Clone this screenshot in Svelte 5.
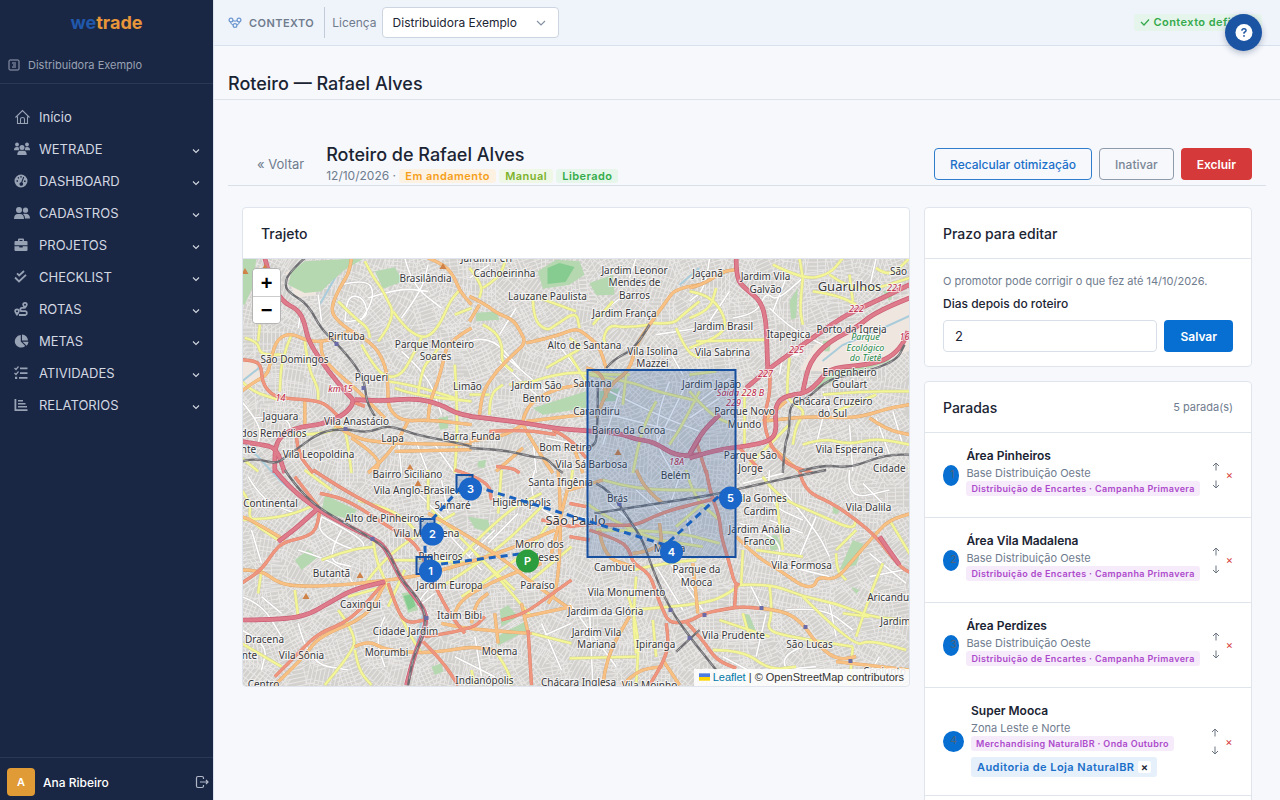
<script lang="ts">
	type Kind = 'street' | 'yellow' | 'orange' | 'trunk' | 'motorway' | 'rail';

	interface Tile {
		x: number;
		y: number;
		parks: string[];
		roads: Record<Kind, string>;
	}

	const menu = [
		{ label: 'Início', icon: 'home', open: false },
		{ label: 'WETRADE', icon: 'users', open: true },
		{ label: 'DASHBOARD', icon: 'gauge', open: true },
		{ label: 'CADASTROS', icon: 'friends', open: true },
		{ label: 'PROJETOS', icon: 'briefcase', open: true },
		{ label: 'CHECKLIST', icon: 'checks', open: true },
		{ label: 'ROTAS', icon: 'route', open: true },
		{ label: 'METAS', icon: 'pie', open: true },
		{ label: 'ATIVIDADES', icon: 'tasks', open: true },
		{ label: 'RELATORIOS', icon: 'bars', open: true }
	];

	const stops = [
		{ name: 'Área Pinheiros', base: 'Base Distribuição Oeste', tag: 'Distribuição de Encartes · Campanha Primavera', audit: '' },
		{ name: 'Área Vila Madalena', base: 'Base Distribuição Oeste', tag: 'Distribuição de Encartes · Campanha Primavera', audit: '' },
		{ name: 'Área Perdizes', base: 'Base Distribuição Oeste', tag: 'Distribuição de Encartes · Campanha Primavera', audit: '' },
		{ name: 'Super Mooca', base: 'Zona Leste e Norte', tag: 'Merchandising NaturalBR · Onda Outubro', audit: 'Auditoria de Loja NaturalBR' }
	];

	let days = $state(2);

	// Tile geometry is stored at three units per map pixel
	const tiles: Tile[] = [
		{
			x: 242,
			y: 258,
			parks: ['M0 0H45L32 90 10 140 0 140Z', 'M190 10L370 0 310 35 270 70 240 100 190 105 140 80 150 40Z', 'M400 40L460 28 485 70 425 92Z', 'M590 480L620 475 620 510 595 515Z'],
			roads: {
				street: 'M300 80L380 60 400 120 350 200M380 120L470 90 560 100M480 180L540 100 560 20M130 130L180 150 170 210M40 480L140 470 150 540M480 280L560 350 600 470M470 540L480 645M520 540L560 645M580 560L640 645M230 110L240 190M490 0L510 80 600 150M0 430L60 500 50 560M310 190L380 190 370 120 320 110Z',
				yellow: 'M370 10L390 50 420 90 440 130 455 160 440 210 410 250M455 160L490 210 540 240 570 230 600 190 625 130 655 95M290 130L340 180 380 210 385 240M10 240L50 250 55 290 120 290M55 200L50 250M150 230L120 300 115 400M190 250L200 330 230 390 230 425M360 260L400 330 440 360 480 350 510 300 540 240M530 410L540 330 580 290 600 250M440 370L510 380 640 420M640 320L650 480 640 645M0 370L30 400 110 425M0 600L50 640M150 530L260 530 310 490 330 645M460 390L510 410 690 430M640 170L690 150',
				orange: 'M330 0L325 40 300 80 275 130 270 170 320 215 400 260 435 330 440 400 440 450 480 490 560 485 690 500M0 400L40 370 80 350 90 290 110 240 150 225 200 250 260 250 320 220M240 250L235 290 280 340 340 390 380 430 430 480M560 0L610 20 640 60 655 100 690 140M690 210L620 250 605 310 590 370 565 430 560 485M280 500L320 530 400 555 690 560M330 540L420 600 400 645M500 490L460 570 380 645M190 425V500M460 580L690 575',
				trunk: 'M165 540L170 590 215 645M0 305L45 308 60 330 62 370 80 400 110 420 200 425 250 435 290 475M330 430L370 445',
				motorway: 'M70 0L85 60 120 130 170 155 190 195 200 250 260 340 320 410 340 430 310 470 240 500 180 505 130 525 100 560V645M340 425L420 430 520 420 600 440 640 465 690 475M0 550L60 560 105 570 130 645',
				rail: 'M190 0L140 45 130 85 145 105 200 140 240 215 285 255 345 325 370 375 375 430 400 475M0 610L40 600 100 618 130 600 170 570 240 520 310 512 380 525 440 500 520 530 600 545 690 565'
			}
		},
		{
			x: 470,
			y: 258,
			parks: ['M205 40L260 5 330 10 345 50 300 80 220 92Z', 'M360 75L430 50 435 110 380 112Z', 'M20 165L80 160 90 185 20 190Z', 'M190 450L350 400V450L220 470Z', 'M390 400L450 390 440 430 390 430Z', 'M25 610L50 605 45 630 25 628Z'],
			roads: {
				street: 'M0 250L60 230 150 330M100 290L230 400M90 310L210 420M250 240L330 340M400 160L480 100M500 0L480 60M560 230L690 210M590 260L640 350M380 380L560 470 690 520M450 400L400 560M0 60L60 20M140 150L90 230M190 540L200 645M230 540L330 560M600 370L540 520 610 645M660 360L560 560M420 470L620 520',
				yellow: 'M0 30L40 80 30 120M40 90L90 60 110 0M40 200L80 220 100 270 95 310 130 340M190 110V180L230 220 260 200 320 160 330 210M320 160L210 120M540 200L470 210 420 200 400 240 410 260M550 195L610 200 640 170 690 130M230 330L300 290 340 270 300 240M190 370L280 340 400 350 480 350M620 210L650 280 690 300M120 380L190 370M370 200L430 130M360 350L480 370 560 400 690 430M560 430L520 500 490 645M470 350L460 440M690 400L640 500 600 560M60 470V410L100 380M300 290L350 370M0 410H60',
				orange: 'M0 115L50 140 80 165 130 185 150 215 170 255 130 290 80 340 40 400 30 470M170 255L260 235 320 210 350 230 390 265 410 330M690 80L620 90 590 130 540 200 500 260 480 340 420 380 380 480M160 490L170 440 260 390 350 380M0 190L30 140M0 550L60 540 110 530 160 500M310 560L340 645M160 500L200 570 250 645M80 640L160 570M340 470L170 490M350 330L400 340 410 420',
				trunk: 'M80 625L130 630 150 645M250 515L300 540 350 600M60 520L160 515 260 530',
				motorway: 'M0 475L150 492 260 512 350 518 450 525 500 545 550 550 620 595 690 590M690 540L660 590',
				rail: 'M0 570L100 575 190 597 230 600 260 630 280 645M385 380V540L370 565 350 570M540 200L500 270 440 300 410 330'
			}
		},
		{
			x: 690,
			y: 258,
			parks: ['M300 130L325 90 320 180 305 185Z', 'M400 250L425 245 420 280 405 280Z', 'M420 345L600 295 600 310 450 360 370 400Z', 'M580 100L620 90 600 130Z'],
			roads: {
				street: 'M60 0L50 90 0 130M130 180L200 170 230 100 260 130 340 60M240 150L300 210 400 260M290 60L250 160M560 0L540 90M330 290L280 290 270 350M480 500L490 640M400 480L380 560M560 480L600 590M610 460L640 560M400 400L420 460M120 100L60 190M30 430L120 360M0 480L90 420',
				yellow: 'M0 100L60 110 110 180 100 230 0 270M20 250L230 245M340 60L330 150 340 200M250 20L340 65 420 50 460 0M420 50L500 110 660 60M480 50L490 130M300 300L290 400 300 430 350 460 320 500 310 560M340 560L400 540 480 560 560 540 660 560M400 410L520 400 660 400M370 100L440 110 500 140M165 400V560M0 400L60 470 130 500M0 350L80 340M330 0L340 60M180 620L300 500M560 30L600 60 660 0M440 460L560 410M0 180L60 160 80 90',
				orange: 'M0 90L40 80 100 40 140 35M220 490L340 475 460 480 520 475 600 450 660 440M540 480L590 515 660 530M240 560L330 640M290 430L220 490',
				trunk: 'M240 330L245 400 220 480 240 560 290 620 370 645M20 550L50 645M150 570L215 640',
				motorway: 'M140 0V60L165 90 215 130 230 190 232 260 235 340M660 80L560 130 500 155 440 190 340 260 240 330 170 390M0 600L80 575 170 565 240 550 262 520 255 450 280 415 350 405 390 370 420 330 540 320 600 300 640 260 655 220M660 120L560 160 500 210 420 250 360 310 340 400M0 590L30 530 90 470',
				rail: 'M280 645L285 560 300 520V450L320 430 350 425 420 360 500 350 620 310 645 260M330 640L400 620 480 630 560 600 610 590 660 590'
			}
		},
		{
			x: 242,
			y: 470,
			parks: ['M250 75L345 120 330 150 240 125Z', 'M775 420L800 405 830 440 780 470Z', 'M765 500L850 455 860 480 770 527Z', 'M480 370L510 365 530 420 500 428Z', 'M680 140L740 150 750 190 700 175Z', 'M570 590L600 580 605 605 580 615Z', 'M160 270L200 240 230 260 180 300Z'],
			roads: {
				street: 'M240 140L380 210 350 250 230 190ZM170 240L300 280 340 350M0 380L60 400 120 500M60 380L120 430M600 30L620 130M560 360L520 400 560 430M580 370L530 410M30 180L60 280M520 60L640 180M740 220L830 130M680 260L760 180M0 480L80 520 60 600M430 440L400 500 430 590M700 500L720 620M900 460L960 600M900 500L990 460M640 560L760 620M20 20L60 90 160 130M300 180L250 270 330 290M880 0L850 90 990 170M170 460L200 580 320 600M610 180L720 300',
				yellow: 'M0 60L30 100 20 150 110 210M395 205L400 260 430 330M240 270L320 240 400 230M360 360L420 260 640 130M440 410L490 300M290 420L350 500 320 560 250 645M440 270L560 270 700 280M620 300L780 130 900 70M700 250L820 360M570 120L700 240 870 440M60 300L50 370M160 360L170 440M340 540L350 600 390 645M760 540L800 600 810 645M690 600L700 645M870 490L990 520M780 0L770 130M560 0V120M600 350L760 250 900 110M660 380L850 260 930 150M520 180L480 130 350 90M230 100L150 140 0 150M190 0L270 60M430 330L490 470 540 550M990 230L870 330M320 380L430 350M0 520L120 590',
				orange: 'M0 300L60 300 110 340 180 350 300 345 400 335 520 320 640 290 800 240 940 180M560 130L650 180 790 270 860 330 990 420M870 490L700 480 600 460M340 530L380 510 430 540 540 550 630 540 690 530 760 540M640 440V400L760 330 900 280M690 460L700 400 740 370M950 0L960 120 950 350 920 400M760 430L770 520M860 490L840 400M130 210L30 150 0 140M100 645L190 560 230 500 380 440 430 340M980 50L930 250M850 440L990 410',
				trunk: 'M235 115L230 170 200 200 130 215 100 240 60 300 0 340M230 110L160 20M235 70L290 80 350 110 440 170 510 210 540 250 580 350 630 440 670 490M100 620L180 540 230 490 330 450 430 335M545 515L600 570 650 645M440 340L470 430 500 460 550 450M640 0L740 30 750 90M860 480L870 645M990 330L920 380 850 430 780 450M990 170L900 150M215 0L290 50 400 110 480 150M550 500L690 480 730 440',
				motorway: 'M100 0L140 50 230 120 320 170 395 205 430 230 460 290 480 330 520 380 555 430 550 480 520 550 495 645M0 450L80 450 190 440 260 400 330 360 430 335M235 110L170 170 110 215',
				rail: 'M130 0L160 45 225 110 320 165 395 208 440 240 475 325 530 385 555 440 545 500 515 560 500 645'
			}
		},
		{
			x: 570,
			y: 470,
			parks: ['M810 300L850 210 882 222 860 285Z', 'M520 430L540 435 562 490 540 500Z', 'M590 200L620 195 642 235 605 242Z', 'M790 110L810 112 805 132 790 130Z', 'M845 350L870 360 860 372Z'],
			roads: {
				street: 'M280 250L400 420M260 290L340 420M300 270L380 370M520 40L640 10M510 160L640 200 620 300M600 0L590 100 700 150M640 60L740 180 780 260M880 40L960 120M900 320L1000 300M540 340L580 420M620 280L780 320M650 420L760 410 850 480M700 530L620 560 690 640M130 380L240 360M30 440L200 430M60 420L70 645M0 400L140 590M460 560L620 645M840 0L830 90 960 60M930 560L880 645M620 600L740 590M700 190L600 150M780 400L800 500M200 60L290 140M120 100L280 240M330 20L300 110M350 130L370 230M590 430L560 560M740 140L690 260M900 250L1010 340',
				yellow: 'M50 100L200 200 400 230M80 180L300 180 450 220M510 345L600 340 700 380 800 400 900 440 1000 450M510 345L480 370 410 400 190 420M580 20L620 80 740 130 850 180 860 150M800 250V300L830 330M860 180L800 240M560 240L700 260M190 300L280 280 380 270M200 320L190 440 200 550M0 565L200 560M600 345L610 430 590 480 660 500 850 530M540 500L520 430M430 540L520 540 600 600 680 590M700 380L850 530 900 510 1010 540M940 280L910 350 860 500M320 170L400 100M10 0L0 60M250 450L260 560M520 240L515 345M960 150L1026 260M350 0L370 80 450 150M100 30L200 60 410 60M170 360L210 470 200 645M620 80L640 240M820 430L900 440M850 530L840 645M450 450L600 500',
				orange: 'M570 415L640 420 700 460 740 520 800 570 860 560M500 200L560 260 630 300 700 350 735 350 745 320 800 330 850 270 920 190 960 150 1026 130M370 280L385 430M0 60L100 30M800 575L1020 600M100 645L110 560 180 440M280 100L230 60 200 0M280 570L330 645M90 180L100 260 190 290M190 250L280 240 270 160M160 645L200 600 280 590',
				trunk: 'M0 170L60 160 190 170 250 140 320 115 500 70M60 180L150 210 180 240 190 280 240 310 260 370 280 420 300 460 360 455 400 430 480 415 520 410 570 415M350 455L400 510 440 570 500 595M410 0L420 60 450 140 455 200 480 280 495 340 510 345M500 340L495 415M690 0L700 60 790 100 860 150 920 200 990 290 1026 310M290 460L300 520 280 580 240 645M0 200L60 210M0 100L50 110',
				motorway: 'M930 200L990 285',
				rail: 'M75 130L330 90 430 75 580 40 770 0M80 40L120 60 180 150 220 210 250 300 300 415 360 500 440 600M320 545L390 480'
			}
		}
	];

	const kinds: Kind[] = ['street', 'yellow', 'orange', 'trunk', 'motorway', 'rail'];

	// Rounds each polyline by curving through the midpoints of its segments
	function soften(d: string) {
		let out = '';
		for (const part of d.split('M').slice(1)) {
			const tokens = part.match(/[LHVZ]|-?[\d.]+/g) ?? [];
			const pts: number[][] = [];
			let i = 0;
			while (i < tokens.length) {
				const last = pts[pts.length - 1];
				if (tokens[i] === 'H') {
					pts.push([+tokens[i + 1], last[1]]);
					i += 2;
				} else if (tokens[i] === 'V') {
					pts.push([last[0], +tokens[i + 1]]);
					i += 2;
				} else if (tokens[i] === 'L') {
					i += 1;
				} else if (tokens[i] === 'Z') {
					pts.push(pts[0]);
					i += 1;
				} else {
					pts.push([+tokens[i], +tokens[i + 1]]);
					i += 2;
				}
			}
			out += `M${pts[0].join(' ')}`;
			for (let n = 1; n < pts.length - 1; n++) {
				const [x, y] = pts[n];
				const [nx, ny] = pts[n + 1];
				out += `Q${x} ${y} ${(x + nx) / 2} ${(y + ny) / 2}`;
			}
			out += `L${pts[pts.length - 1].join(' ')}`;
		}
		return out;
	}

	// Small residential streets, laid out as short slanted grids
	let seed = 7;
	function rand() {
		seed = (seed * 16807) % 2147483647;
		return seed / 2147483647;
	}

	function buildBlocks() {
		const out: { x: number; y: number; turn: number; d: string }[] = [];
		for (let y = 262; y < 700; y += 26) {
			for (let x = 246; x < 920; x += 26) {
				let d = '';
				for (let i = -16; i <= 16; i += 4) {
					const a = Math.round(rand() * 10);
					d += `M${i} ${-18 + a}V${18 - a}`;
					if (rand() > 0.4) d += `M${-17 + a} ${i}H${17 - a}`;
				}
				out.push({ x, y, turn: Math.round(rand() * 90), d });
			}
		}
		return out;
	}
	const blocks = buildBlocks();

	// [text, centre x, baseline y]
	const places: [string, number, number][] = [
		['Brasilândia', 426, 282], ['Cachoeirinha', 505, 277], ['Jardim Peri', 487, 262], ['Jardim Leonor', 635, 274],
		['Mendes de', 635, 286], ['Barros', 635, 299], ['Jaçanã', 708, 277], ['Jardim Vila', 766, 280], ['Galvão', 766, 293],
		['São', 899, 275], ['Lauzane Paulista', 548, 300], ['Jardim França', 625, 317], ['Jardim Brasil', 724, 330],
		['Itapegica', 789, 338], ['Porto da Igreja', 852, 333], ['Pirituba', 347, 340], ['Parque Monteiro', 435, 348],
		['Soares', 436, 360], ['Alto de Santana', 585, 349], ['Vila Isolina', 653, 355], ['Mazzei', 653, 367],
		['Vila Sabrina', 723, 356], ['São Domingos', 295, 363], ['Piqueri', 372, 381], ['Limão', 468, 390],
		['Jardim São', 537, 389], ['Bento', 537, 402], ['Santana', 593, 387], ['Jardim Japão', 712, 388],
		['Engenheiro', 850, 376], ['Goulart', 850, 388], ['Carandiru', 597, 415], ['Parque Novo', 745, 415],
		['Mundo', 745, 428], ['Chácara Cruzeiro', 833, 405], ['do Sul', 833, 417], ['Jaguara', 281, 420],
		['Vila Anastácio', 357, 425], ['Barra Funda', 472, 440], ['Lapa', 393, 442], ['dos Remédios', 274, 437],
		['Bairro da Coroa', 629, 434], ['Bom Retiro', 566, 451], ['Vila Sá Barbosa', 592, 468], ['Vila Esperança', 850, 453],
		['Parque São', 751, 459], ['Jorge', 751, 472], ['Vila Leopoldina', 319, 458], ['nte', 249, 453],
		['Bairro Siciliano', 408, 478], ['Belém', 676, 479], ['Cidade Líder', 903, 472], ['Vila Anglo-Brasileira', 421, 494],
		['Santa Ifigênia', 561, 486], ['Higienópolis', 522, 506], ['Sumaré', 453, 509], ['Brás', 618, 502],
		['Continental', 271, 507], ['Alto de Pinheiros', 385, 522], ['Vila Gomes', 761, 502], ['Cardim', 761, 515],
		['Vila Dalila', 869, 511], ['Vila Madalena', 427, 537], ['Pinheiros', 441, 560], ['Morro dos', 540, 548],
		['Ingleses', 540, 561], ['Mooca', 670, 552], ['Jardim Anália', 760, 533], ['Franco', 760, 545],
		['Cambuci', 615, 571], ['Parque da', 697, 573], ['Mooca', 697, 586], ['Vila Formosa', 802, 569],
		['Butantã', 332, 577], ['Jardim Europa', 450, 589], ['Paraíso', 538, 589], ['Vila Monumento', 627, 596],
		['Caxingui', 361, 608], ['Itaim Bibi', 460, 619], ['Jardim da Glória', 606, 615], ['Aricanduva', 894, 601],
		['Dracena', 265, 643], ['Cidade Jardim', 406, 635], ['Jardim Vila', 597, 636], ['Mariana', 597, 648],
		['Ipiranga', 656, 648], ['Vila Prudente', 734, 639], ['São Lucas', 810, 648], ['Jardim', 896, 625],
		['nte', 250, 659], ['Vila Sônia', 302, 659], ['Morumbi', 387, 656], ['Moema', 500, 655],
		['Indianópolis', 485, 684], ['Chácara Inglesa', 579, 686], ['Centro', 264, 688], ['Vila Moinho', 650, 689],
		['Conjunto', 885, 675]
	];

	const shields: [string, number, number][] = [
		['221', 895, 291], ['222', 857, 312], ['225', 797, 353], ['227', 766, 377], ['Saída 228 B', 741, 396],
		['229', 734, 406], ['14', 281, 401], ['km 15', 341, 392], ['18A', 677, 465], ['16', 905, 340]
	];

	const peaks = ['246 271', '266 267', '444 266', '411 467', '419 483', '307 596', '361 575', '619 452'];
	const stations = ['337 344', '364 388', '346 429', '705 615', '762 608', '806 627', '851 661', '690 638', '671 610', '620 504', '373 539', '427 618'];

	const pins = [
		{ label: '1', x: 431, y: 571 },
		{ label: '2', x: 433, y: 534 },
		{ label: '3', x: 471, y: 489 },
		{ label: '4', x: 672, y: 552 },
		{ label: '5', x: 731, y: 498 },
		{ label: 'P', x: 528, y: 561 }
	];
</script>

<div class="shell">
	<aside class="sidebar">
		<div class="brand"><span>we</span>trade</div>
		<div class="tenant">
			<svg viewBox="0 0 12 12" width="12" height="12" fill="none" stroke="currentColor">
				<rect x="1" y="1" width="10" height="10" rx="1" />
				<path d="M4 4h4M5 6h3M4 8h4" />
			</svg>
			Distribuidora Exemplo
		</div>
		<nav>
			{#each menu as item}
				<a href="#top" class="item">
					<svg class="icon" viewBox="0 0 16 16" fill="currentColor">
						{#if item.icon === 'home'}
							<path fill="none" stroke="currentColor" stroke-width="1.1" d="M3.5 7.5V14.5H13.5V7.5M1.5 8.5L8.5 1.5 15.5 8.5M6.5 14.5V10Q6.500 8.500 8.500 8.500T10.500 10V14.500" />
						{:else if item.icon === 'users'}
							<circle cx="3" cy="3.500" r="1.900" /><circle cx="13" cy="3.500" r="1.900" /><circle cx="8" cy="6.500" r="2.500" />
							<path d="M0 9Q0 6 3 6 4.400 6 5 6.800 4.400 8 5.400 9.300H0ZM16 9Q16 6 13 6 11.600 6 11 6.800 11.600 8 10.600 9.300H16ZM3.300 14Q3.300 9.800 6.500 9.800H9.500Q12.700 9.800 12.700 14Z" />
						{:else if item.icon === 'gauge'}
							<path fill-rule="evenodd" d="M7 1.500A6.500 6.500 0 1 0 7 14.500 6.500 6.500 0 1 0 7 1.500ZM6.200 3.200H7.800V4.600H6.200ZM2.500 7.200H4V8.700H2.500ZM3.600 4.500L4.700 4.100 5.200 5.200 4.100 5.700ZM10 7.500H11.600V9H10ZM9.200 3.800L10.200 4.300 8.300 9.500A1.800 1.800 0 1 1 7.200 9.200Z" />
						{:else if item.icon === 'friends'}
							<circle cx="5" cy="5" r="3" /><circle cx="11.500" cy="5.200" r="2.600" />
							<path d="M0 14Q0 9 4 9H6Q10 9 10 14ZM10 8.800Q16 8 16 13.500H11Q11.200 10.500 9 9Z" />
						{:else if item.icon === 'briefcase'}
							<path fill-rule="evenodd" d="M4 4V2.500Q4 1.500 5 1.500H9Q10 1.500 10 2.500V4H12.500Q13.500 4 13.500 5V8.300H.5V5Q.5 4 1.500 4ZM5.500 4H8.500V3H5.500ZM.5 9.200H5.300V10.500H8.700V9.200H13.500V13Q13.500 14 12.500 14H1.500Q.5 14 .5 13Z" />
						{:else if item.icon === 'checks'}
							<path fill="none" stroke="currentColor" stroke-width="1.800" d="M3 4.300L5.200 6.500 10 2M1 8.500L5 12.500 12 5.800" />
						{:else if item.icon === 'route'}
							<path fill-rule="evenodd" d="M3 7.500A2.700 2.700 0 0 1 5.700 10.200Q5.700 11.500 3 15 .3 11.500 .3 10.200A2.700 2.700 0 0 1 3 7.500ZM3 9.300A1 1 0 1 0 3 11.300 1 1 0 1 0 3 9.300ZM11 1A2.700 2.700 0 0 1 13.700 3.700Q13.700 5 11 8 8.300 5 8.300 3.700A2.700 2.700 0 0 1 11 1ZM11 2.700A1 1 0 1 0 11 4.700 1 1 0 1 0 11 2.700Z" />
							<path fill="none" stroke="currentColor" stroke-width="1.800" d="M5 14H11.500A2 2 0 0 0 11.500 10.200H8A1.700 1.700 0 0 1 8 6.800H10.500" />
						{:else if item.icon === 'pie'}
							<path d="M6.800 2V8.500L11.300 13A6.300 6.300 0 1 1 6.800 2ZM8 1.500A6.300 6.300 0 0 1 14 7.500H8ZM8.500 8.700H14.500Q14.300 11 12.700 12.700Z" />
						{:else if item.icon === 'tasks'}
							<path fill="none" stroke="currentColor" stroke-width="1.200" d="M.5 3L2 4.500 4.500 1.500M.5 8L2 9.500 4.500 6.500" />
							<path d="M6 2.500H13.500V4.200H6ZM6 7.200H13.500V8.900H6ZM5 12H13.500V13.700H5ZM1 11.800H3.200V14H1Z" />
						{:else}
							<path d="M.5 2H2.300V12.200H13.500V14H.5ZM4 3H9V4.600H4ZM4 6H11.500V7.600H4ZM4 9H13V10.600H4Z" />
						{/if}
					</svg>
					<span>{item.label}</span>
					{#if item.open}
						<svg class="caret" viewBox="0 0 8 6" width="8" height="6" fill="none" stroke="currentColor" stroke-width="1.100"><path d="M1 1.500L4 4.500 7 1.500" /></svg>
					{/if}
				</a>
			{/each}
		</nav>
		<div class="account">
			<span class="avatar">A</span>
			<strong>Ana Ribeiro</strong>
			<button class="logout" aria-label="Sair">
				<svg viewBox="0 0 14 14" width="14" height="14" fill="none" stroke="currentColor" stroke-width="1.200">
					<path d="M8.500 4V3Q8.500 1.500 7 1.500H3Q1.500 1.500 1.500 3V11Q1.500 12.500 3 12.500H7Q8.500 12.500 8.500 11V10M5 7H13M11 5L13 7 11 9" />
				</svg>
			</button>
		</div>
	</aside>

	<main id="top">
		<header class="context">
			<svg viewBox="0 0 14 12" width="14" height="12" fill="none" stroke="#6b97cf" stroke-width="1.200">
				<circle cx="3" cy="3" r="1.900" /><circle cx="11" cy="3" r="1.900" /><circle cx="7" cy="8.500" r="1.900" />
				<path d="M2.500 5Q3 7.500 5.200 8M11.500 5Q11 7.500 8.800 8M5 3.500Q7 4.800 9 3.500" />
			</svg>
			<b>CONTEXTO</b>
			<i class="rule"></i>
			<label for="license">Licença</label>
			<div class="picker">
				<select id="license">
					<option>Distribuidora Exemplo</option>
				</select>
				<svg viewBox="0 0 10 6" width="10" height="6" fill="none" stroke="#8592a3" stroke-width="1.200"><path d="M1 1L5 5 9 1" /></svg>
			</div>
			<span class="badge ok">
				<svg viewBox="0 0 10 8" width="10" height="8" fill="none" stroke="currentColor" stroke-width="1.300"><path d="M1 4L4 7 9 1.500" /></svg>
				Contexto definido
			</span>
		</header>
		<button class="help" aria-label="Ajuda">
			<svg viewBox="0 0 18 18" width="18" height="18">
				<circle cx="9" cy="8.500" r="8.500" fill="#fff" />
				<path fill="none" stroke="#1b54a3" stroke-width="1.400" d="M6.900 6.700Q6.900 4.800 9 4.800T11.100 6.600Q11.100 7.600 9 8.600V9.700" />
				<circle cx="9" cy="11.900" r=".9" fill="#1b54a3" />
			</svg>
		</button>

		<h1>Roteiro — Rafael Alves</h1>

		<section class="page">
			<div class="heading">
				<a href="#top" class="back">« Voltar</a>
				<div class="title">
					<h2>Roteiro de Rafael Alves</h2>
					<p>
						12/10/2026 ·
						<span class="badge warn">Em andamento</span>
						<span class="badge lime">Manual</span>
						<span class="badge green">Liberado</span>
					</p>
				</div>
				<div class="actions">
					<button class="btn outline">Recalcular otimização</button>
					<button class="btn muted">Inativar</button>
					<button class="btn danger">Excluir</button>
				</div>
			</div>

			<div class="columns">
				<article class="card">
					<div class="card-head"><h3>Trajeto</h3></div>
					<div class="map">
						<svg class="canvas" viewBox="243 259 667 427" preserveAspectRatio="xMidYMid slice">
							<rect x="243" y="259" width="667" height="427" fill="#d3d1ce" />
							<g class="blocks">
								{#each blocks as b}
									<path d={b.d} transform="translate({b.x} {b.y}) rotate({b.turn})" />
								{/each}
							</g>
							<path class="industry" d="M800 370L815 345 912 292V350L870 366 830 372ZM286 272L312 264 323 272 316 295 296 298ZM243 360L256 362 262 380 243 390Z" />
							<path class="river" d="M823 361L843 345 877 331 912 315M243 381L262 366M340 270L320 305M680 285L700 268M243 440L282 482 320 512 380 542 396 570 424 612 408 686" />
							{#each tiles as t}
								<g transform="translate({t.x} {t.y}) scale(0.3333)">
									{#each t.parks as d}<path class="park" {d} />{/each}
								</g>
							{/each}
							<path class="field" d="M548 268L560 263 575 267 566 282 548 284Z M404 596L412 594 416 606 409 610Z" />
							{#each kinds as kind}
								{#each tiles as t}
									<g class={kind} transform="translate({t.x} {t.y}) scale(0.3333)">
										<path class="edge" d={soften(t.roads[kind])} />
										<path class="fill" d={soften(t.roads[kind])} />
									</g>
								{/each}
							{/each}
							{#each stations as s}
								<path class="station" d="M{s}m-2 -2h4v4h-4z" />
							{/each}
							{#each peaks as p}
								<path class="peak" d="M{p}m-4 3h7l-3.500 -6z" />
							{/each}
							<g class="places">
								{#each places as [text, x, y]}<text {x} {y}>{text}</text>{/each}
							</g>
							<g class="places big">
								<text x="850" y="291">Guarulhos</text>
								<text x="576" y="525">São Paulo</text>
							</g>
							<g class="places exits">
								{#each shields as [text, x, y]}<text {x} {y}>{text}</text>{/each}
							</g>
							<g class="places nature">
								<text x="866" y="340">Parque</text>
								<text x="866" y="351">Ecológico</text>
								<text x="866" y="361">do Tietê</text>
							</g>
							<g class="zone">
								<rect x="588" y="370" width="148" height="187" />
								<rect x="457" y="475" width="16" height="16" />
								<rect x="421" y="519" width="14" height="15" />
								<rect x="417" y="557" width="15" height="17" />
							</g>
							<path class="track" d="M520 554L426 566 425 528 465 483 666 545 725 491" />
							{#each pins as pin}
								<g class="pin" class:start={pin.label === 'P'}>
									<circle cx={pin.x} cy={pin.y} r="11.500" />
									<text x={pin.x} y={pin.y + 4}>{pin.label}</text>
								</g>
							{/each}
						</svg>
						<div class="zoom">
							<button aria-label="Aproximar">+</button>
							<button aria-label="Afastar">−</button>
						</div>
						<div class="credit">
							<svg viewBox="0 0 12 8" width="11" height="8"><path fill="#4c7be1" d="M0 0H12V4H0Z" /><path fill="#ffd500" d="M0 4H12V8H0Z" /></svg>
							<a href="#top">Leaflet</a> | © OpenStreetMap contributors
						</div>
					</div>
				</article>

				<div class="side">
					<article class="card">
						<div class="card-head"><h3>Prazo para editar</h3></div>
						<form class="deadline" onsubmit={(e) => e.preventDefault()}>
							<p>O promotor pode corrigir o que fez até 14/10/2026.</p>
							<label for="days">Dias depois do roteiro</label>
							<div class="field-row">
								<input id="days" type="text" inputmode="numeric" bind:value={days} />
								<button class="btn primary">Salvar</button>
							</div>
						</form>
					</article>

					<article class="card">
						<div class="card-head"><h3>Paradas</h3><small>5 parada(s)</small></div>
						<ul>
							{#each stops as stop, i}
								<li>
									<span class="number">{i + 1}</span>
									<div class="stop">
										<strong>{stop.name}</strong>
										<span class="base">{stop.base}</span>
										<span class="badge purple">{stop.tag}</span>
										<div class="audits">
											{#if stop.audit}
												<span class="audit">{stop.audit} <button aria-label="Remover auditoria">×</button></span>
											{/if}
										</div>
									</div>
									<div class="order">
										<button aria-label="Subir"><svg viewBox="0 0 8 9" width="8" height="9"><path d="M4 8.500V1M1 4L4 1 7 4" /></svg></button>
										<button aria-label="Descer"><svg viewBox="0 0 8 9" width="8" height="9"><path d="M4 .5V8M1 5L4 8 7 5" /></svg></button>
									</div>
									<button class="remove" aria-label="Remover parada">×</button>
								</li>
							{/each}
							<li></li>
						</ul>
					</article>
				</div>
			</div>
		</section>
	</main>
</div>

<style>
	:global(body) {
		background: #f6f8fc;
		color: #1b2433;
		font-family: Inter, 'Liberation Sans', sans-serif;
		font-size: 12px;
	}

	* {
		box-sizing: border-box;
	}

	button,
	input,
	select {
		font: inherit;
		margin: 0;
	}

	button {
		cursor: pointer;
	}

	h1,
	h2,
	h3,
	p,
	ul {
		margin: 0;
		padding: 0;
	}

	.shell {
		display: flex;
		height: 100vh;
	}

	.sidebar {
		display: flex;
		flex-direction: column;
		flex: none;
		width: 213px;
		background: #1a2744;
		color: #d3d8e2;
	}

	.brand {
		padding: 12px 0;
		color: #e8963a;
		font-size: 18px;
		font-weight: 700;
		line-height: 22px;
		text-align: center;
	}

	.brand span {
		color: #2058ab;
	}

	.tenant {
		display: flex;
		align-items: center;
		gap: 8px;
		height: 38px;
		padding: 0 8px;
		border-bottom: 1px solid #2b3853;
		color: #98a1b3;
		font-size: 11px;
	}

	nav {
		flex: 1;
		padding-top: 17px;
	}

	.item {
		display: flex;
		align-items: center;
		height: 32px;
		padding: 0 13px 0 14px;
		color: inherit;
		font-size: 13px;
		text-decoration: none;
	}

	.icon {
		width: 16px;
		height: 16px;
		margin-right: 9px;
		color: #98a2b5;
	}

	.caret {
		margin: 4px 0 0 auto;
	}

	.account {
		display: flex;
		align-items: center;
		gap: 8px;
		height: 43px;
		padding: 6px 4px 0 7px;
		border-top: 1px solid #2b3853;
		color: #fff;
		font-size: 12px;
	}

	.account strong {
		font-weight: 500;
	}

	.avatar {
		width: 28px;
		height: 28px;
		border-radius: 4px;
		background: #e09a36;
		font-size: 11px;
		font-weight: 600;
		line-height: 28px;
		text-align: center;
	}

	.logout {
		display: flex;
		margin-left: auto;
		padding: 0;
		border: 0;
		background: none;
		color: #b0b8c8;
	}

	main {
		flex: 1;
		min-width: 0;
		overflow-y: auto;
		scrollbar-width: none;
		border-left: 1px solid #dce2ec;
	}

	.context {
		display: flex;
		align-items: center;
		height: 46px;
		padding: 0 18px 0 14px;
		border-bottom: 1px solid #d8e1ee;
		background: #eff3fa;
		color: #6f7c8e;
	}

	.context b {
		margin: 0 10px 0 7px;
		font-size: 11px;
		font-weight: 600;
		letter-spacing: 0.04em;
	}

	.rule {
		width: 1px;
		height: 31px;
		margin-right: 7px;
		background: #c3cbd8;
	}

	.picker {
		position: relative;
		margin-left: 5px;
	}

	.picker select {
		width: 177px;
		height: 31px;
		padding: 0 10px;
		border: 1px solid #cdd5e0;
		border-radius: 4px;
		background: #fff;
		color: #1b2433;
		appearance: none;
	}

	.picker svg {
		position: absolute;
		top: 13px;
		right: 13px;
		pointer-events: none;
	}

	.badge {
		padding: 0 6px;
		border-radius: 3px;
		font-size: 11px;
		font-weight: 600;
		letter-spacing: 0.04em;
		line-height: 17px;
		white-space: nowrap;
	}

	.ok {
		margin-left: auto;
		background: #e6f5ec;
		color: #34aa4d;
	}

	.warn {
		background: #fdf2e2;
		color: #f59f1a;
	}

	.lime {
		background: #eff7e6;
		color: #7cb32b;
	}

	.green {
		background: #e6f6ea;
		color: #34ac4c;
	}

	.purple {
		align-self: flex-start;
		padding: 0 5px;
		background: #f6ebfb;
		color: #ad4acb;
		font-size: 9px;
		line-height: 15px;
	}

	.help {
		position: fixed;
		top: 14px;
		right: 18px;
		display: grid;
		place-items: center;
		width: 37px;
		height: 37px;
		padding: 0;
		border: 0;
		border-radius: 50%;
		background: #1b54a3;
		box-shadow: 0 2px 6px rgba(20, 40, 80, 0.3);
	}

	h1 {
		padding: 26px 14px 3px;
		border-bottom: 1px solid #dfe4ec;
		font-size: 18px;
		font-weight: 500;
		line-height: 24px;
	}

	.page {
		padding: 43px 14px 14px;
	}

	.heading {
		display: flex;
		align-items: center;
		height: 43px;
		padding: 0 14px;
		border-bottom: 1px solid #d9e0ea;
	}

	.back {
		padding: 0 22px 0 15px;
		color: #6f7c8e;
		font-size: 13px;
		text-decoration: none;
	}

	h2 {
		font-size: 18px;
		font-weight: 500;
		line-height: 24px;
	}

	.title p {
		color: #6f7c8e;
		line-height: 18px;
	}

	.actions {
		display: flex;
		gap: 7px;
		margin-left: auto;
	}

	.btn {
		height: 32px;
		padding: 0 15px;
		border: 1px solid transparent;
		border-radius: 4px;
		background: none;
		font-weight: 500;
	}

	.outline {
		border-color: #2f7dcb;
		color: #1a6fc9;
	}

	.muted {
		border-color: #8f9aaa;
		color: #7a8696;
	}

	.danger {
		background: #d63939;
		color: #fff;
	}

	.primary {
		background: #066fd1;
		color: #fff;
	}

	.danger,
	.primary {
		font-weight: 600;
	}

	.columns {
		display: grid;
		grid-template-columns: minmax(0, 1fr) 328px;
		align-items: start;
		gap: 14px;
		padding: 21px 14px 0;
	}

	.side {
		display: grid;
		gap: 14px;
	}

	.card {
		overflow: hidden;
		border: 1px solid #e0e5ed;
		border-radius: 4px;
		background: #fff;
	}

	.card-head {
		display: flex;
		align-items: center;
		justify-content: space-between;
		height: 51px;
		padding: 0 18px;
		border-bottom: 1px solid #e0e5ed;
	}

	h3 {
		font-size: 14px;
		font-weight: 500;
	}

	.card-head small {
		color: #6f7c8e;
		font-size: 11px;
	}

	.map {
		position: relative;
		height: 427px;
		overflow: hidden;
	}

	.canvas {
		display: block;
		width: 100%;
		height: 100%;
	}

	.blocks path {
		fill: none;
		stroke: #e9e7e5;
		stroke-width: 1;
	}

	.industry {
		fill: #eee6df;
	}

	.river {
		fill: none;
		stroke: #a9ccdb;
		stroke-width: 2;
	}

	.park {
		fill: #b5d8b0;
	}

	.field {
		fill: #86cc90;
	}

	.edge,
	.fill {
		fill: none;
		stroke-linejoin: round;
	}

	.street .edge {
		stroke: #c4c1be;
		stroke-width: 7;
	}

	.street .fill {
		stroke: #fff;
		stroke-width: 5;
	}

	.yellow .edge {
		stroke: #cfd08e;
		stroke-width: 9;
	}

	.yellow .fill {
		stroke: #f3f597;
		stroke-width: 7;
	}

	.orange .edge {
		stroke: #dca468;
		stroke-width: 10;
	}

	.orange .fill {
		stroke: #f8c083;
		stroke-width: 8;
	}

	.trunk .edge {
		stroke: #d67c68;
		stroke-width: 10;
	}

	.trunk .fill {
		stroke: #f0967f;
		stroke-width: 8;
	}

	.motorway .edge {
		stroke: #cb5d74;
		stroke-width: 14;
	}

	.motorway .fill {
		stroke: #de7c8c;
		stroke-width: 10;
	}

	.rail .edge {
		stroke: #6e6e72;
		stroke-width: 7;
	}

	.rail .fill {
		stroke: #a5a5a8;
		stroke-width: 3;
		stroke-dasharray: 20 20;
	}

	.station {
		fill: #6b6ba8;
	}

	.peak {
		fill: #cf8248;
	}

	.places {
		fill: #38383c;
		stroke: rgba(255, 255, 255, 0.7);
		stroke-width: 2px;
		paint-order: stroke;
		font-family: 'Noto Sans', sans-serif;
		font-size: 10px;
		text-anchor: middle;
	}

	.big {
		font-size: 13px;
	}

	.exits {
		fill: #bd2746;
		font-size: 9px;
		font-style: italic;
	}

	.nature {
		fill: #26884a;
		font-size: 9px;
		font-style: italic;
	}

	.zone rect {
		fill: rgba(36, 92, 170, 0.22);
		stroke: #174f9f;
		stroke-width: 2;
	}

	.track {
		fill: none;
		stroke: #1b62bf;
		stroke-width: 3;
		stroke-dasharray: 7 5;
	}

	.pin circle {
		fill: #1b66c9;
	}

	.pin.start circle {
		fill: #2b9d3f;
	}

	.pin text {
		fill: #fff;
		font-size: 11px;
		font-weight: 600;
		text-anchor: middle;
	}

	.zoom {
		position: absolute;
		top: 9px;
		left: 9px;
		border: 1px solid #b4b4b4;
		border-radius: 4px;
		overflow: hidden;
	}

	.zoom button {
		display: block;
		width: 27px;
		height: 27px;
		padding: 0;
		border: 0;
		background: #fff;
		color: #000;
		font-family: 'Liberation Sans', sans-serif;
		font-size: 20px;
		font-weight: 700;
		line-height: 26px;
	}

	.zoom button + button {
		border-top: 1px solid #ccc;
	}

	.credit {
		position: absolute;
		right: 0;
		bottom: 0;
		padding: 0 5px;
		background: rgba(255, 255, 255, 0.85);
		color: #333;
		font-family: 'Liberation Sans', sans-serif;
		font-size: 11px;
		line-height: 17px;
	}

	.credit a {
		color: #0078a8;
		text-decoration: none;
	}

	.deadline {
		padding: 14px 18px;
	}

	.deadline p {
		color: #6f7c8e;
		font-size: 11px;
		line-height: 16px;
	}

	.deadline label {
		display: block;
		padding: 6px 0 7px;
		font-weight: 500;
		line-height: 18px;
	}

	.field-row {
		display: flex;
		gap: 7px;
	}

	.field-row input {
		flex: 1;
		min-width: 0;
		height: 32px;
		padding: 0 11px;
		border: 1px solid #d9dfe8;
		border-radius: 4px;
		color: #1b2433;
		font-size: 13px;
	}

	li {
		display: flex;
		align-items: center;
		min-height: 85px;
		padding: 14px 18px;
		border-bottom: 1px solid #e0e5ed;
	}

	.number {
		flex: 0 1 21px;
		min-width: 14px;
		height: 21px;
		margin-right: 7px;
		padding-left: 7px;
		border-radius: 50%;
		background: #066fd1;
		color: #4b647f;
		font-size: 11px;
		line-height: 19px;
	}

	.stop {
		display: flex;
		flex: 1 0 auto;
		flex-direction: column;
		padding-right: 12px;
	}

	.stop strong {
		font-size: 12px;
		font-weight: 600;
		line-height: 18px;
	}

	.base {
		color: #6f7c8e;
		font-size: 11px;
		line-height: 16px;
	}

	.audits {
		min-height: 7px;
		padding-top: 6px;
	}

	.audit {
		display: inline-block;
		margin-bottom: 4px;
		padding: 0 6px;
		border-radius: 3px;
		background: #e6f0fa;
		color: #1a6fc9;
		font-size: 11px;
		font-weight: 600;
		letter-spacing: 0.04em;
		line-height: 20px;
	}

	.audit button {
		padding: 0 3px;
		border: 0;
		border-radius: 2px;
		background: #fff;
		color: #1b2433;
		line-height: 12px;
	}

	.order {
		display: grid;
		gap: 9px;
		margin-right: 6px;
	}

	.order button,
	.remove {
		display: block;
		padding: 0;
		border: 0;
		background: none;
	}

	.order svg {
		display: block;
		fill: none;
		stroke: #6b7482;
	}

	.remove {
		width: 8px;
		color: #d63939;
		font-size: 11px;
	}
</style>
